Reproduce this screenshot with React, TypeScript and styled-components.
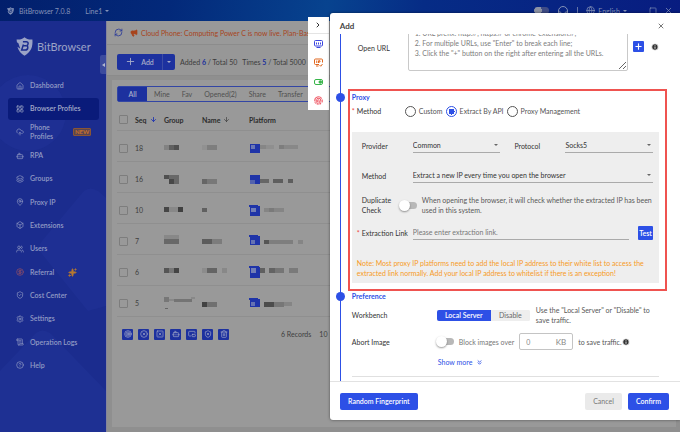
import React from "react";
import styled, { createGlobalStyle, css } from "styled-components";
import {
  House, LayoutGrid, CloudUpload, Bot, Layers, MapPin, Box, Users, CircleDollarSign, ShieldCheck,
  Settings, ScrollText, CircleQuestionMark, RefreshCw, Megaphone, Plus, ArrowDown, X, Globe, Headphones,
  ChevronRight, ChevronsDown, Sparkles, Square, Fingerprint, Info, Trash2,
  Target, CircleX, SquareX, PictureInPicture2, ShieldX,
} from "lucide-react";

const blue = "#2d50e6";

const GlobalStyle = createGlobalStyle`
  *, *::before, *::after { box-sizing: border-box; }
  html, body, #root { height: 100%; }
  body { margin: 0; overflow: hidden; font: 7px/10px Lato, "Open Sans", sans-serif; color: #333; }
  button, input, select, textarea { font: inherit; color: inherit; margin: 0; padding: 0; border: 0; background: none; outline: 0; border-radius: 0; }
  button { display: inline-flex; align-items: center; justify-content: center; white-space: nowrap; }
  svg { flex: none; display: block; }
`;

const Page = styled.div`
  position: relative;
  display: flex;
  flex-direction: column;
  height: 100vh;
  background: #8f8f8f;
`;

/* ---------- window bar ---------- */
const TitleBar = styled.header`
  display: flex;
  align-items: center;
  height: 21px;
  flex: none;
  padding: 0 7px;
  color: #8492b8;
  font-size: 8px;
  background: linear-gradient(100deg, #021f6c 0%, #03297a 25%, #07438f 48%, #062c86 62%, #081c80 100%);
`;
const Product = styled.strong`
  margin: 0 15px 0 5px;
  font-weight: 400;
  font-size: 7px;
`;
const BarMenu = styled.button`
  gap: 3px;
  font-size: 7px;
`;
const BarTools = styled.div`
  display: flex;
  align-items: center;
  gap: 8px;
  margin-left: auto;
`;
const ThemePill = styled.span`
  width: 15px;
  height: 7px;
  border-radius: 4px;
  background: radial-gradient(circle at 4px 50%, #8d93a4 4px, #3f4c86 4px);
`;
const BarDivider = styled.span`
  width: 1px;
  height: 7px;
  background: #6575a8;
`;
const WindowButtons = styled.div`
  display: flex;
  gap: 7px;
  margin-left: 14px;
`;
const Caret = styled.span`
  width: 0;
  height: 0;
  border: 2px solid transparent;
  border-top-color: currentColor;
  border-bottom: 0;
`;

/* ---------- sidebar ---------- */
const Columns = styled.div`
  display: flex;
  flex: 1;
  min-height: 0;
`;
const Sidebar = styled.aside`
  position: relative;
  width: 106px;
  flex: none;
  background: #1b2c8e;
  color: #8e97c2;
`;
const SidebarArt = styled.svg`
  position: absolute;
  inset: 0;
  width: 100%;
  height: 100%;
`;
const Brand = styled.div`
  position: relative;
  display: flex;
  align-items: flex-start;
  gap: 4px;
  padding: 16px 16px 0;
  height: 53px;
  font-size: 11px;
  line-height: 20px;
  color: #9ba3c6;
`;
const Nav = styled.nav`
  position: relative;
  display: grid;
  grid-auto-rows: 1fr;
  height: 303px;
  padding: 0 8px;
`;
const NavLink = styled.a<{ $active?: boolean }>`
  display: flex;
  align-items: center;
  gap: 6px;
  margin: 1px 0;
  padding: 0 8px;
  border-radius: 3px;
  color: ${(p) => (p.$active ? "#a5acc9" : "#929bc4")};
  background: ${(p) => (p.$active ? "#0a1b7a" : "transparent")};
  font-weight: 600;
  line-height: 9px;
  text-decoration: none;
`;
const NavText = styled.span<{ $narrow?: boolean }>`
  width: ${(p) => (p.$narrow ? "30px" : "auto")};
  white-space: ${(p) => (p.$narrow ? "normal" : "nowrap")};
`;
const NewBadge = styled.span`
  margin-left: 7px;
  padding: 0 1px;
  border: 1px solid #8a5534;
  border-radius: 1px;
  background: #5a4550;
  color: #c8702a;
  font-size: 6px;
  line-height: 6px;
  font-weight: 700;
`;
const SparkSlot = styled.span`
  margin-left: 8px;
  color: #b8792f;
`;
const Collapse = styled.button`
  position: absolute;
  right: 0;
  top: 34px;
  width: 6px;
  height: 19px;
  border-radius: 2px 0 0 2px;
  background: #3c4b9e;
`;
const LeftArrow = styled.span`
  border: 2px solid transparent;
  border-left: 0;
  border-right: 3px solid #b3b8cf;
`;

/* ---------- profiles page ---------- */
const Main = styled.main`
  flex: 1;
  min-width: 0;
  display: flex;
  flex-direction: column;
  border-left: 1px solid #85859c;
`;
const Banner = styled.div`
  display: flex;
  align-items: center;
  gap: 3px;
  height: 24px;
  flex: none;
  padding-left: 7px;
  background: #999;
  border-bottom: 1px solid #8c8c8c;
  color: #a8441c;
  white-space: nowrap;
  svg:first-child { color: #1f309a; margin-right: 4px; }
`;
const Toolbar = styled.section`
  display: flex;
  align-items: center;
  height: 31px;
  flex: none;
  padding: 3px 0 0 10px;
  background: #979797;
  border-bottom: 1px solid #8b8b8b;
  color: #3c3c3c;
  white-space: nowrap;
`;
const AddGroup = styled.div`
  display: flex;
  width: 58px;
  height: 16px;
  margin-right: 5px;
  border-radius: 2px;
  background: #1d319f;
  color: #a4aac8;
`;
const AddButton = styled.button`
  flex: 1;
  gap: 5px;
  font-weight: 600;
`;
const AddMore = styled.button`
  width: 13px;
  border-left: 1px solid #3c4ca4;
`;
const Stat = styled.span`
  margin-right: 5px;
  b { color: #1a2f9c; }
`;
const ListCard = styled.section`
  display: flex;
  flex-direction: column;
  flex: 1;
  margin: 4px 4px 5px 5px;
  padding: 6px 0 0 5px;
  background: #999;
`;
const Tabs = styled.div`
  display: flex;
  height: 16px;
  flex: none;
  border: 1px solid #3346a4;
  border-radius: 2px 0 0 2px;
  color: #505050;
`;
const Tab = styled.button<{ $active?: boolean }>`
  padding: 0 6px;
  ${(p) =>
    p.$active &&
    css`
      width: 29px;
      margin-right: 1px;
      background: #1d319f;
      color: #a9afcb;
      font-weight: 600;
    `}
`;
const Table = styled.table`
  width: 100%;
  table-layout: fixed;
  border-collapse: collapse;
  margin-top: 4px;
  color: #404040;
  th { height: 24px; padding: 8px 0 4px; text-align: left; font-weight: 700; color: #2c2c2c; }
  td { height: 31px; padding: 5px 0 0; }
  tr { border-bottom: 1px solid #8f8f8f; }
  svg { display: block; }
`;
const Col = styled.col<{ $w?: number }>`
  width: ${(p) => (p.$w ? `${p.$w}px` : "auto")};
`;
const Tick = styled.input`
  appearance: none;
  display: block;
  width: 9px;
  height: 9px;
  margin-left: 2px;
  border: 1px solid #7d7d7d;
  border-radius: 1px;
`;
const Sort = styled.span`
  display: flex;
  align-items: center;
  gap: 3px;
`;
const Actions = styled.div`
  display: flex;
  align-items: center;
  gap: 5px;
  margin: 12px 0 0 5px;
  color: #404040;
`;
const IconAction = styled.button`
  width: 11px;
  height: 11px;
  border-radius: 1px;
  background: #1d319f;
  color: #a4aac8;
`;
const Records = styled.span`
  display: flex;
  gap: 8px;
  margin-left: 47px;
  white-space: nowrap;
`;

/* ---------- drawer ---------- */
const Overlay = styled.div`
  position: absolute;
  inset: 13px 0 12px;
  display: flex;
  justify-content: flex-end;
  align-items: flex-start;
  gap: 1px;
`;
const Rail = styled.div`
  display: flex;
  flex-direction: column;
  width: 21px;
  margin-top: 4px;
  background: #fff;
`;
const RailButton = styled.button<{ $tone: string; $short?: boolean }>`
  height: ${(p) => (p.$short ? 17 : 19)}px;
  color: ${(p) => p.$tone};
  border-bottom: ${(p) => (p.$short ? "1px solid #e4e4e4" : "0")};
`;
const Drawer = styled.section`
  display: flex;
  flex-direction: column;
  width: 51.5%;
  height: 100%;
  border-radius: 3px 0 0 3px;
  background: #fff;
  box-shadow: 0 0 3px rgba(0, 0, 0, 0.5);
`;
const DrawerHead = styled.div`
  display: flex;
  align-items: center;
  justify-content: space-between;
  height: 21px;
  flex: none;
  padding: 4px 15px 0 10px;
  h2 { margin: 0; font-size: 8px; font-weight: 700; color: #444; }
`;
const DrawerBody = styled.div`
  display: flex;
  flex-direction: column;
  flex: 1;
  min-height: 0;
  overflow: hidden;
  padding: 0 13px 0 11px;
  background: linear-gradient(${blue}, ${blue}) 10px 0 / 1px 100% no-repeat;
`;
const UrlRow = styled.div`
  display: flex;
  align-items: flex-end;
  height: 37px;
  flex: none;
  padding-left: 17px;
`;
const UrlLabel = styled.label`
  width: 50px;
  padding-bottom: 18px;
`;
const UrlBox = styled.textarea`
  flex: 1;
  height: 54px;
  padding: 10px 6px 0;
  border: 1px solid #c9c9c9;
  border-radius: 2px;
  resize: vertical;
  overflow: hidden;
  &::placeholder { color: #7c7c7c; }
`;
const UrlTools = styled.div`
  display: flex;
  align-items: center;
  gap: 7px;
  padding: 0 8px 19px 5px;
`;
const PlusButton = styled.button`
  width: 11px;
  height: 11px;
  border-radius: 1px;
  background: ${blue};
  color: #fff;
`;
const ProxySection = styled.section`
  flex: none;
  margin: 18px 0 0 7px;
  padding: 1px 6px 6px 2px;
  border: 2px solid #ef5350;
`;
const SectionTitle = styled.h3`
  position: relative;
  margin: 0;
  font-size: 7px;
  line-height: 10px;
  font-weight: 700;
  color: ${blue};
`;
const Dot = styled.span`
  position: absolute;
  left: -16px;
  top: 1px;
  width: 9px;
  height: 9px;
  border-radius: 50%;
  background: ${blue};
`;
const RadioRow = styled.div`
  display: flex;
  align-items: center;
  height: 18px;
  margin-bottom: 12px;
`;
const FieldName = styled.span<{ $w: number }>`
  width: ${(p) => p.$w}px;
  flex: none;
`;
const Required = styled.span`
  width: 5px;
  flex: none;
  color: #ef4444;
`;
const RadioLabel = styled.label`
  display: flex;
  align-items: center;
  gap: 3px;
  margin-right: 3px;
  color: #555;
  white-space: nowrap;
`;
const Radio = styled.input`
  appearance: none;
  width: 11px;
  height: 11px;
  border: 1px solid #555;
  border-radius: 50%;
  &:checked { border-color: ${blue}; background: radial-gradient(circle, ${blue} 3px, #fff 3px); }
`;
const Panel = styled.div`
  padding: 6px 6px 5px 5px;
  background: #eee;
`;
const Row = styled.div<{ $gap?: number; $required?: boolean }>`
  display: flex;
  align-items: center;
  margin-bottom: ${(p) => p.$gap ?? 0}px;
  padding-left: ${(p) => (p.$required ? 0 : 5)}px;
`;
const Label = styled.label<{ $w: number }>`
  width: ${(p) => p.$w}px;
  flex: none;
`;
const SelectWrap = styled.span`
  position: relative;
  display: flex;
  flex: 1;
  min-width: 0;
  border-bottom: 1px solid #aaa;
  ${Caret} { position: absolute; right: 2px; top: 6px; color: #666; }
`;
const Select = styled.select`
  appearance: none;
  width: 100%;
  height: 14px;
`;
const SpacedLabel = styled(Label)`
  margin-left: 14px;
`;
const Switch = styled.input`
  appearance: none;
  position: relative;
  width: 17px;
  height: 7px;
  flex: none;
  border-radius: 4px;
  background: #b8b8b8;
  &::before {
    content: "";
    position: absolute;
    left: -1px;
    top: -2px;
    width: 11px;
    height: 11px;
    border-radius: 50%;
    background: #fff;
    box-shadow: 0 1px 2px rgba(0, 0, 0, 0.4);
  }
`;
const Hint = styled.span<{ $after?: boolean }>`
  margin-left: ${(p) => (p.$after ? 5 : 0)}px;
  color: #585858;
  white-space: nowrap;
`;
const LinkInput = styled.input`
  flex: 1;
  min-width: 0;
  height: 15px;
  border-bottom: 1px solid #aaa;
  &::placeholder { color: #777; }
`;
const TestButton = styled.button`
  width: 15px;
  height: 14px;
  margin-left: 9px;
  border-radius: 1px;
  background: ${blue};
  color: #fff;
  font-weight: 600;
`;
const Note = styled.p`
  margin: 0;
  color: #f79a1e;
  white-space: nowrap;
`;
const Preference = styled.section`
  flex: none;
  margin: 0 8px 0 11px;
  border-bottom: 1px solid #e0e0e0;
`;
const PrefRow = styled.div<{ $h: number }>`
  display: flex;
  align-items: center;
  height: ${(p) => p.$h}px;
`;
const Segment = styled.div`
  display: flex;
  width: 93px;
  height: 11px;
  margin-right: 6px;
  border-radius: 2px;
  overflow: hidden;
  background: #eee;
`;
const SegmentButton = styled.button<{ $on?: boolean }>`
  width: ${(p) => (p.$on ? "54px" : "39px")};
  background: ${(p) => (p.$on ? blue : "#eee")};
  color: ${(p) => (p.$on ? "#fff" : "#666")};
  font-weight: ${(p) => (p.$on ? 600 : 400)};
`;
const SizeField = styled.label`
  display: flex;
  align-items: center;
  width: 54px;
  height: 17px;
  margin: 0 5px;
  padding: 0 6px;
  border: 1px solid #c4c4c4;
  border-radius: 2px;
  color: #888;
  font-size: 8px;
`;
const SizeInput = styled.input`
  flex: 1;
  min-width: 0;
  font-size: 7px;
`;
const SwitchText = styled.label`
  display: flex;
  align-items: center;
  gap: 5px;
  color: #777;
  white-space: nowrap;
`;
const ShowMore = styled.button`
  gap: 4px;
  margin: 3px 0 9px 86px;
  color: ${blue};
`;
const DrawerFoot = styled.footer`
  display: flex;
  align-items: center;
  gap: 6px;
  height: 39px;
  flex: none;
  padding: 0 11px 0 10px;
  border-top: 1px solid #e2e2e2;
`;
const FootButton = styled.button<{ $plain?: boolean; $w: number }>`
  width: ${(p) => p.$w}px;
  height: 17px;
  border-radius: 2px;
  background: ${(p) => (p.$plain ? "#eaeaea" : blue)};
  color: ${(p) => (p.$plain ? "#777" : "#fff")};
  font-weight: ${(p) => (p.$plain ? 400 : 600)};
  &:first-child { margin-right: auto; }
`;

function Shield({ size, cut }: { size: number; cut: string }) {
  return (
    <svg width={size} height={Math.round(size * 1.12)} viewBox="0 0 16 18" fill="none">
      <path d="M.5 2.4C4 2.7 6 1.9 8 .3c2 1.6 4.200 2.400 7.500 2.100.5 7-1.200 11.800-7.500 15.300C4.600 15.800 2.300 13 1.300 9.200L4 11.200 2.200 5.900.8 5z" fill="currentColor" />
      <path d="M6.500 4.500h3.200c2.300 0 2.400 3.400 0 3.700 2.300.3 1.700 4.200-.9 4.200H5.300L7 7.200M7 8.200h2.500" stroke={cut} strokeWidth="1.400" />
    </svg>
  );
}

function Screen() {
  return (
    <svg width="9" height="8" viewBox="0 0 18 16" fill="none" stroke="currentColor" strokeWidth="2">
      <rect x="1" y="1" width="16" height="11" rx="2" />
      <path d="M5 15h8M5 5v4M9 5v4M13 5v4" />
    </svg>
  );
}

function ScreenCheck() {
  return (
    <svg width="9" height="9" viewBox="0 0 18 18" fill="none" stroke="currentColor" strokeWidth="2">
      <path d="M10 13H3a2 2 0 0 1-2-2V4a2 2 0 0 1 2-2h12a2 2 0 0 1 2 2v5M4 16h5M5.500 5v5M9 10V5.500h3v2.500H9M11 14l2.500 2.500L17 12" />
    </svg>
  );
}

const nav = [
  { text: "Dashboard", icon: House },
  { text: "Browser Profiles", icon: LayoutGrid, active: true },
  { text: "Phone Profiles", icon: CloudUpload, badge: true },
  { text: "RPA", icon: Bot },
  { text: "Groups", icon: Layers },
  { text: "Proxy IP", icon: MapPin },
  { text: "Extensions", icon: Box },
  { text: "Users", icon: Users },
  { text: "Referral", icon: CircleDollarSign, spark: true },
  { text: "Cost Center", icon: ShieldCheck },
  { text: "Settings", icon: Settings },
  { text: "Operation Logs", icon: ScrollText },
  { text: "Help", icon: CircleQuestionMark },
];

type Cell = [number, number, number, number, string];
const mark: Cell[] = [[1, 2, 10, 9, "#1f34a8"]];
const rows: { seq: number; group: Cell[]; name: Cell[]; platform: Cell[] }[] = [
  {
    seq: 18,
    group: [[0, 3, 5, 5, "#828282"], [5, 3, 5, 5, "#606060"], [10, 3, 5, 5, "#505050"]],
    name: [[0, 3, 5, 5, "#919191"], [5, 3, 10, 5, "#7e7e7e"]],
    platform: [...mark, [2, 3, 4, 4, "#6a77b4"], [11, 3, 6, 4, "#868686"], [17, 3, 8, 4, "#8f8f8f"], [30, 3, 5, 4, "#7d7d7d"], [35, 3, 14, 4, "#888"]],
  },
  {
    seq: 16,
    group: [[0, 2, 5, 4, "#505050"], [5, 2, 10, 9, "#686868"], [5, 6, 5, 5, "#484848"]],
    name: [[0, 6, 5, 5, "#666"], [5, 6, 10, 5, "#787878"]],
    platform: [...mark, [1, 7, 5, 4, "#5362ad"], [11, 6, 9, 4, "#666"], [24, 6, 10, 4, "#5e5e5e"], [39, 6, 5, 4, "#5e5e5e"]],
  },
  {
    seq: 10,
    group: [[0, 3, 5, 5, "#464646"], [5, 3, 9, 5, "#888"], [14, 3, 5, 5, "#404040"]],
    name: [[0, 4, 5, 4, "#606060"]],
    platform: [[0, 1, 9, 2, "#1f34a8"], [1, 2, 10, 10, "#1f34a8"], [2, 4, 5, 4, "#737fb6"], [15, 4, 20, 4, "#858585"], [20, 4, 5, 4, "#7a7a7a"]],
  },
  {
    seq: 7,
    group: [[0, 0, 15, 4, "#888"], [0, 4, 15, 5, "#686868"]],
    name: [[0, 4, 10, 5, "#5c5c5c"], [10, 4, 10, 5, "#7c7c7c"]],
    platform: [[0, 0, 9, 2, "#1f34a8"], [1, 1, 10, 9, "#1f34a8"], [2, 5, 4, 4, "#6572b3"], [15, 5, 5, 4, "#555"], [20, 5, 24, 4, "#7e7e7e"], [49, 5, 5, 4, "#858585"]],
  },
  {
    seq: 6,
    group: [[0, 2, 5, 5, "#555"], [5, 2, 5, 5, "#777"], [10, 2, 5, 5, "#444"]],
    name: [[0, 2, 5, 5, "#8c8c8c"], [5, 2, 10, 5, "#646464"], [20, 2, 5, 5, "#888"]],
    platform: [[0, 0, 10, 2, "#1f34a8"], [1, 1, 10, 11, "#1f34a8"], [2, 2, 5, 5, "#737fb6"], [11, 2, 5, 5, "#606060"], [20, 2, 6, 5, "#636363"], [26, 2, 9, 5, "#757575"], [40, 2, 9, 5, "#7a7a7a"]],
  },
  {
    seq: 5,
    group: [[0, 0, 5, 5, "#777"], [5, 2, 6, 2, "#888"], [10, 2, 18, 3, "#747474"], [27, 0, 4, 2, "#888"], [1, 11, 3, 1, "#666"]],
    name: [[0, 5, 5, 5, "#424242"], [5, 5, 10, 5, "#707070"]],
    platform: [[0, 1, 9, 2, "#1f34a8"], [1, 2, 10, 8, "#1f34a8"], [2, 5, 4, 4, "#6572b3"], [15, 5, 10, 5, "#4c4c4c"], [25, 5, 10, 5, "#777"], [35, 5, 8, 4, "#858585"]],
  },
];

function Mosaic({ cells }: { cells: Cell[] }) {
  return (
    <svg width="56" height="12" viewBox="0 0 56 12" shapeRendering="crispEdges" aria-hidden>
      {cells.map(([x, y, w, h, fill], i) => (
        <rect key={i} x={x} y={y} width={w} height={h} fill={fill} />
      ))}
    </svg>
  );
}

const actions = [Target, CircleX, SquareX, Bot, PictureInPicture2, ShieldX, Trash2];
const actionNames = ["Open", "Close", "Remove", "Automation", "Arrange windows", "Clear cache", "Delete"];

function InfoDot() {
  return <Info size={8} fill="#333" stroke="#fff" strokeWidth={2.5} />;
}

export default function App() {
  return (
    <>
      <GlobalStyle />
      <Page>
        <TitleBar>
          <Shield size={7} cut="#03226f" />
          <Product>BitBrowser 7.0.8</Product>
          <BarMenu>Line1 <Caret /></BarMenu>
          <BarTools>
            <ThemePill />
            <Headphones size={12} />
            <BarDivider />
            <BarMenu><Globe size={9} /> English <Caret /></BarMenu>
            <WindowButtons>
              <button aria-label="Maximize"><Square size={8} /></button>
              <button aria-label="Close window"><X size={9} /></button>
            </WindowButtons>
          </BarTools>
        </TitleBar>
        <Columns>
          <Sidebar>
            <SidebarArt viewBox="0 0 106 411" preserveAspectRatio="none" aria-hidden>
              <circle cx="28" cy="92" r="38" fill="#22349a" opacity=".4" />
              <path d="M84 170q6-5 14 0l8 7v108l-18 5-46-57q-5-7 0-13z" fill="#22359a" opacity=".4" />
              <path d="M0 350l36-38q6-5 14 0l56 58v41H0z" fill="#24379a" opacity=".4" />
            </SidebarArt>
            <Brand><Shield size={17} cut="#1b2c8e" />BitBrowser</Brand>
            <Nav>
              {nav.map(({ text, icon: Icon, active, badge, spark }) => (
                <NavLink key={text} href="#" $active={active}>
                  <Icon size={8} color={spark ? "#9b5263" : "currentColor"} />
                  <NavText $narrow={badge}>{text}</NavText>
                  {badge && <NewBadge>NEW</NewBadge>}
                  {spark && <SparkSlot><Sparkles size={9} fill="currentColor" /></SparkSlot>}
                </NavLink>
              ))}
            </Nav>
            <Collapse aria-label="Collapse menu"><LeftArrow /></Collapse>
          </Sidebar>
          <Main>
            <Banner>
              <RefreshCw size={9} />
              <Megaphone size={8} fill="currentColor" />
              Cloud Phone: Computing Power C is now live. Plan-Based
            </Banner>
            <Toolbar>
              <AddGroup>
                <AddButton><Plus size={11} />Add</AddButton>
                <AddMore aria-label="More add options"><Caret /></AddMore>
              </AddGroup>
              <Stat>Added <b>6</b> / Total 50</Stat>
              <Stat>Times <b>5</b> / Total 5000</Stat>
            </Toolbar>
            <ListCard>
              <Tabs>
                <Tab $active>All</Tab>
                {["Mine", "Fav", "Opened(2)", "Share", "Transfer"].map((t) => <Tab key={t}>{t}</Tab>)}
              </Tabs>
              <Table>
                <colgroup><Col $w={18} /><Col $w={29} /><Col $w={38} /><Col $w={47} /><Col /></colgroup>
                <thead>
                  <tr>
                    <th><Tick type="checkbox" aria-label="Select all" /></th>
                    <th><Sort>Seq <ArrowDown size={7} color="#1f34b0" strokeWidth={3} /></Sort></th>
                    <th>Group</th>
                    <th><Sort>Name <ArrowDown size={7} /></Sort></th>
                    <th>Platform</th>
                  </tr>
                </thead>
                <tbody>
                  {rows.map((r) => (
                    <tr key={r.seq}>
                      <td><Tick type="checkbox" aria-label={`Select ${r.seq}`} /></td>
                      <td>{r.seq}</td>
                      <td><Mosaic cells={r.group} /></td>
                      <td><Mosaic cells={r.name} /></td>
                      <td><Mosaic cells={r.platform} /></td>
                    </tr>
                  ))}
                </tbody>
              </Table>
              <Actions>
                {actions.map((Icon, i) => (
                  <IconAction key={i} aria-label={actionNames[i]}><Icon size={8} /></IconAction>
                ))}
                <Records><span>6 Records</span><span>10</span></Records>
              </Actions>
            </ListCard>
          </Main>
        </Columns>

        <Overlay>
          <Rail>
            <RailButton $tone="#333" $short aria-label="Hide"><ChevronRight size={8} strokeWidth={3} /></RailButton>
            <RailButton $tone="#3b46e0" aria-label="Browser"><Screen /></RailButton>
            <RailButton $tone="#e0661e" aria-label="IP check"><ScreenCheck /></RailButton>
            <RailButton $tone="#38b54a" aria-label="Toggle">
              <svg width="9" height="6" viewBox="0 0 18 12" fill="none" stroke="currentColor" strokeWidth="2">
                <rect x="1" y="1" width="16" height="10" rx="3" /><circle cx="12.500" cy="6" r="2.500" fill="currentColor" />
              </svg>
            </RailButton>
            <RailButton $tone="#f0616d" aria-label="Fingerprint"><Fingerprint size={9} strokeWidth={3} /></RailButton>
          </Rail>
          <Drawer role="dialog" aria-label="Add">
            <DrawerHead><h2>Add</h2><button aria-label="Close"><X size={8} /></button></DrawerHead>
            <DrawerBody>
              <UrlRow>
                <UrlLabel htmlFor="url">Open URL</UrlLabel>
                <UrlBox id="url" placeholder={"1. URL prefix: http://, https:// or chrome-extension://;\n2. For multiple URLs, use \"Enter\" to break each line;\n3. Click the \"+\" button on the right after entering all the URLs."} />
                <UrlTools><PlusButton aria-label="Add URLs"><Plus size={9} strokeWidth={3} /></PlusButton><InfoDot /></UrlTools>
              </UrlRow>

              <ProxySection>
                <SectionTitle><Dot />Proxy</SectionTitle>
                <RadioRow>
                  <Required>*</Required>
                  <FieldName $w={48}>Method</FieldName>
                  <RadioLabel><Radio type="radio" name="method" />Custom</RadioLabel>
                  <RadioLabel><Radio type="radio" name="method" defaultChecked />Extract By API</RadioLabel>
                  <RadioLabel><Radio type="radio" name="method" />Proxy Management</RadioLabel>
                </RadioRow>
                <Panel>
                  <Row $gap={15}>
                    <Label $w={51} htmlFor="provider">Provider</Label>
                    <SelectWrap><Select id="provider"><option>Common</option></Select><Caret /></SelectWrap>
                    <SpacedLabel $w={51} htmlFor="protocol">Protocol</SpacedLabel>
                    <SelectWrap><Select id="protocol"><option>Socks5</option></Select><Caret /></SelectWrap>
                  </Row>
                  <Row $gap={12}>
                    <Label $w={51} htmlFor="extract">Method</Label>
                    <SelectWrap><Select id="extract"><option>Extract a new IP every time you open the browser</option></Select><Caret /></SelectWrap>
                  </Row>
                  <Row $gap={10}>
                    <Label $w={38} htmlFor="dup">Duplicate<br />Check</Label>
                    <Switch id="dup" type="checkbox" role="switch" />
                    <Hint $after>When opening the browser, it will check whether the extracted IP has been<br />used in this system.</Hint>
                  </Row>
                  <Row $gap={18} $required>
                    <Required>*</Required>
                    <Label $w={51} htmlFor="link">Extraction Link</Label>
                    <LinkInput id="link" placeholder="Please enter extraction link." />
                    <TestButton>Test</TestButton>
                  </Row>
                  <Note>
                    Note: Most proxy IP platforms need to add the local IP address to their white list to access the<br />
                    extracted link normally. Add your local IP address to whitelist if there is an exception!
                  </Note>
                </Panel>
              </ProxySection>

              <Preference>
                <SectionTitle><Dot />Preference</SectionTitle>
                <PrefRow $h={28}>
                  <FieldName $w={85}>Workbench</FieldName>
                  <Segment><SegmentButton $on>Local Server</SegmentButton><SegmentButton>Disable</SegmentButton></Segment>
                  <Hint>Use the "Local Server" or "Disable" to<br />save traffic.</Hint>
                </PrefRow>
                <PrefRow $h={25}>
                  <FieldName $w={85}>Abort Image</FieldName>
                  <SwitchText><Switch type="checkbox" role="switch" />Block images over</SwitchText>
                  <SizeField><SizeInput aria-label="Image size" defaultValue="0" />KB</SizeField>
                  <Hint>to save traffic.</Hint>
                  <InfoDot />
                </PrefRow>
                <ShowMore>Show more <ChevronsDown size={7} strokeWidth={3} /></ShowMore>
              </Preference>
            </DrawerBody>
            <DrawerFoot>
              <FootButton $w={78}>Random Fingerprint</FootButton>
              <FootButton $w={37} $plain>Cancel</FootButton>
              <FootButton $w={41}>Confirm</FootButton>
            </DrawerFoot>
          </Drawer>
        </Overlay>
      </Page>
    </>
  );
}
